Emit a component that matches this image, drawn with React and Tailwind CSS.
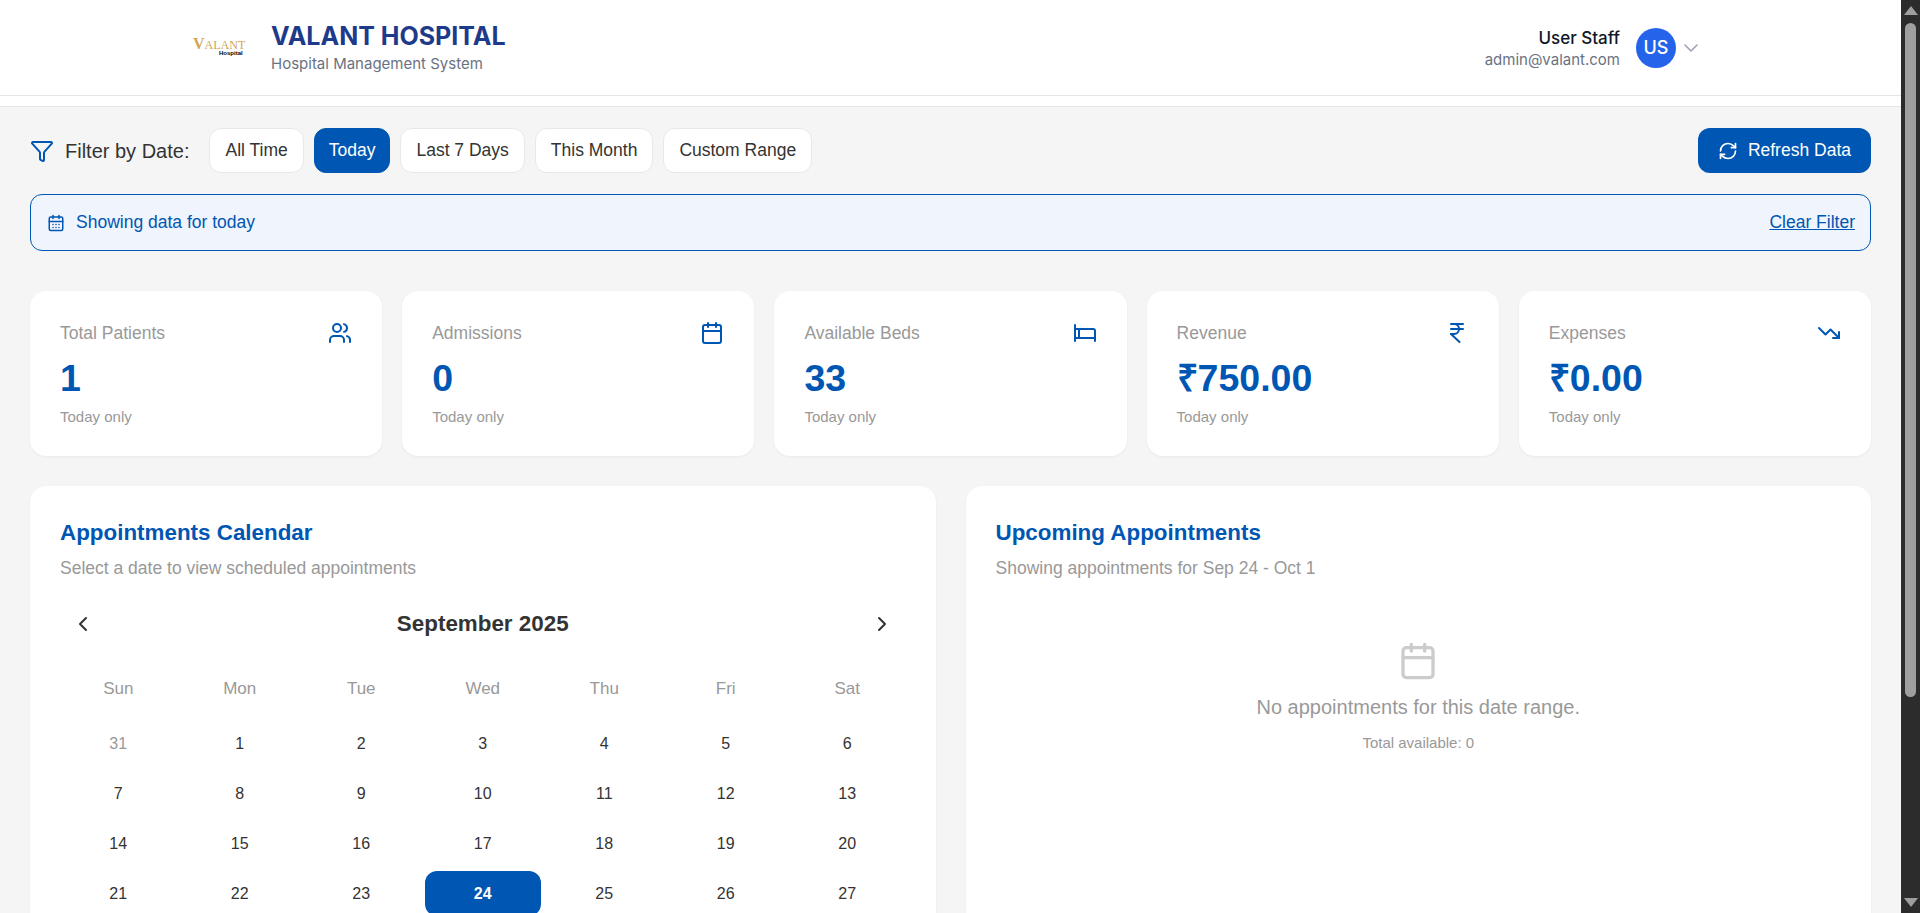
import React from "react";
import {
  Bed,
  Calendar,
  CalendarDays,
  ChevronDown,
  ChevronLeft,
  ChevronRight,
  Filter,
  IndianRupee,
  RefreshCw,
  TrendingDown,
  Users,
} from "lucide-react";

const filters = ["All Time", "Today", "Last 7 Days", "This Month", "Custom Range"];

const stats = [
  { label: "Total Patients", value: "1", icon: Users },
  { label: "Admissions", value: "0", icon: Calendar },
  { label: "Available Beds", value: "33", icon: Bed },
  { label: "Revenue", value: "₹750.00", icon: IndianRupee },
  { label: "Expenses", value: "₹0.00", icon: TrendingDown },
];

const weekdays = ["Sun", "Mon", "Tue", "Wed", "Thu", "Fri", "Sat"];

const days = [
  31, 1, 2, 3, 4, 5, 6, 7, 8, 9, 10, 11, 12, 13, 14, 15, 16, 17, 18, 19, 20, 21,
  22, 23, 24, 25, 26, 27,
];

const Logo = () => (
  <div className="flex w-[54px] flex-col items-start leading-none">
    <div className="flex items-baseline font-['Liberation_Serif',serif] text-[#cfa658]">
      <span className="text-[16px] font-bold leading-[10px]">V</span>
      <span className="text-[12px] leading-[10px]">ALANT</span>
    </div>
    <span className="ml-[26px] text-[6px] font-semibold leading-[6px] text-black">Hospital</span>
  </div>
);

const Header = () => (
  <header className="border-b-[1px] border-[#e5e5e5] bg-white">
    <div className="flex h-[95px] items-center justify-between pl-[193px] pr-[198px]">
      <div className="flex items-center gap-6">
        <Logo />
        <div className="font-['Inter',sans-serif]">
          <h1 className="text-[25px] font-bold leading-8 text-[#1e3a8a]">VALANT HOSPITAL</h1>
          <p className="mt-[1px] text-[15px] text-gray-500">Hospital Management System</p>
        </div>
      </div>
      <div className="flex items-center font-['Inter',sans-serif]">
        <div className="mr-4 text-right">
          <p className="text-[17px] font-medium leading-6 text-gray-900">User Staff</p>
          <p className="text-[15px] leading-5 text-gray-500">admin@valant.com</p>
        </div>
        <div className="flex h-10 w-10 items-center justify-center rounded-full bg-[#2563eb] text-lg font-medium text-white">
          US
        </div>
        <ChevronDown size={24} strokeWidth={1.5} className="ml-[3px] text-gray-400" />
      </div>
    </div>
  </header>
);

const FilterBar = () => (
  <div className="flex items-center justify-between">
    <div className="flex items-center">
      <Filter size={24} className="text-[#0056b3]" strokeWidth={2} />
      <span className="ml-[11px] mr-[20px] text-xl text-[#333]">Filter by Date:</span>
      <div className="flex gap-[10px]">
        {filters.map((name) => (
          <button
            key={name}
            className={
              name === "Today"
                ? "h-[45px] rounded-xl border border-[#0056b3] bg-[#0056b3] px-[14px] text-[17.5px] text-white"
                : "h-[45px] rounded-xl border border-[#e8e8e8] bg-white px-[15px] text-[17.5px] text-[#333]"
            }
          >
            {name}
          </button>
        ))}
      </div>
    </div>
    <button className="flex h-[45px] items-center gap-[10px] rounded-xl bg-[#0056b3] px-[20px] text-[17.5px] text-white">
      <RefreshCw size={20} />
      Refresh Data
    </button>
  </div>
);

const InfoBar = () => (
  <div className="mt-[21px] flex h-[57px] items-center justify-between rounded-xl border border-[#0056b3] bg-[#eff4fd] pl-[16px] pr-[15px] text-[17.5px] text-[#0056b3]">
    <div className="flex items-center gap-[11px]">
      <CalendarDays size={18} />
      <span>Showing data for today</span>
    </div>
    <span className="underline">Clear Filter</span>
  </div>
);

const StatCard = ({ label, value, icon: Icon }) => (
  <div className="h-[165px] rounded-2xl bg-white p-[30px] shadow-[0_1px_3px_rgba(0,0,0,0.05)]">
    <div className="flex items-start justify-between">
      <span className="text-[17.5px] leading-[24px] text-[#999]">{label}</span>
      <Icon size={24} className="text-[#0056b3]" />
    </div>
    <p className="mt-[10px] text-[37.5px] font-bold leading-[46px] text-[#0056b3]">{value}</p>
    <p className="mt-[6px] text-[15px] leading-[20px] text-[#999]">Today only</p>
  </div>
);

const CalendarCard = () => (
  <div className="rounded-2xl bg-white p-[30px] shadow-[0_1px_3px_rgba(0,0,0,0.05)]">
    <h2 className="text-[22.4px] font-bold leading-[34px] text-[#0056b3]">Appointments Calendar</h2>
    <p className="mt-[6px] text-[17.5px] leading-[24px] text-[#999]">
      Select a date to view scheduled appointments
    </p>
    <div className="mt-[24px] flex h-[40px] items-center justify-between px-[11px] text-[#333]">
      <ChevronLeft size={24} />
      <span className="text-[22.4px] font-bold">September 2025</span>
      <ChevronRight size={24} />
    </div>
    <div className="mt-[22px] grid grid-cols-7 gap-[5px]">
      {weekdays.map((day) => (
        <div key={day} className="flex h-[45px] items-center justify-center text-[17px] text-[#999]">
          {day}
        </div>
      ))}
    </div>
    <div className="mt-[10px] grid grid-cols-7 gap-[5px]">
      {days.map((day) => (
        <div
          key={day}
          className={
            day === 24
              ? "flex h-[45px] items-center justify-center rounded-xl bg-[#0056b3] font-bold text-white"
              : day === 31
                ? "flex h-[45px] items-center justify-center text-[#999]"
                : "flex h-[45px] items-center justify-center text-[#333]"
          }
        >
          {day}
        </div>
      ))}
    </div>
  </div>
);

const UpcomingCard = () => (
  <div className="rounded-2xl bg-white p-[30px] shadow-[0_1px_3px_rgba(0,0,0,0.05)]">
    <h2 className="text-[22.4px] font-bold leading-[34px] text-[#0056b3]">Upcoming Appointments</h2>
    <p className="mt-[6px] text-[17.5px] leading-[24px] text-[#999]">
      Showing appointments for Sep 24 - Oct 1
    </p>
    <div className="mt-[61px] flex flex-col items-center">
      <Calendar size={40} className="text-[#ccc]" />
      <p className="mt-[12px] text-xl leading-[28px] text-[#999]">
        No appointments for this date range.
      </p>
      <p className="mt-[11px] text-[15px] text-[#999]">Total available: 0</p>
    </div>
  </div>
);

// window scrollbar, part of the screenshot
const Scrollbar = () => (
  <div className="flex h-full w-[19px] shrink-0 flex-col items-center bg-[#2c2c2c] py-[6px]">
    <div className="h-0 w-0 border-x-[7px] border-b-[9px] border-x-transparent border-b-[#9f9f9f]" />
    <div className="mt-[8px] h-[674px] w-[11px] rounded-full bg-[#9f9f9f]" />
    <div className="mt-auto h-0 w-0 border-x-[7px] border-t-[9px] border-x-transparent border-t-[#9f9f9f]" />
  </div>
);

export default function App() {
  return (
    <div className="flex h-screen overflow-hidden bg-[#f5f5f5] font-['Liberation_Sans',Arial,sans-serif]">
      <div className="min-w-0 flex-1">
        <Header />
        <div className="h-[11px] border-b border-[#e5e5e5] bg-white" />
        <main className="px-[30px] pt-[21px]">
          <FilterBar />
          <InfoBar />
          <div className="mt-[40px] grid grid-cols-5 gap-5">
            {stats.map((stat) => (
              <StatCard key={stat.label} {...stat} />
            ))}
          </div>
          <div className="mt-[30px] grid grid-cols-2 gap-[30px]">
            <CalendarCard />
            <UpcomingCard />
          </div>
        </main>
      </div>
      <Scrollbar />
    </div>
  );
}
